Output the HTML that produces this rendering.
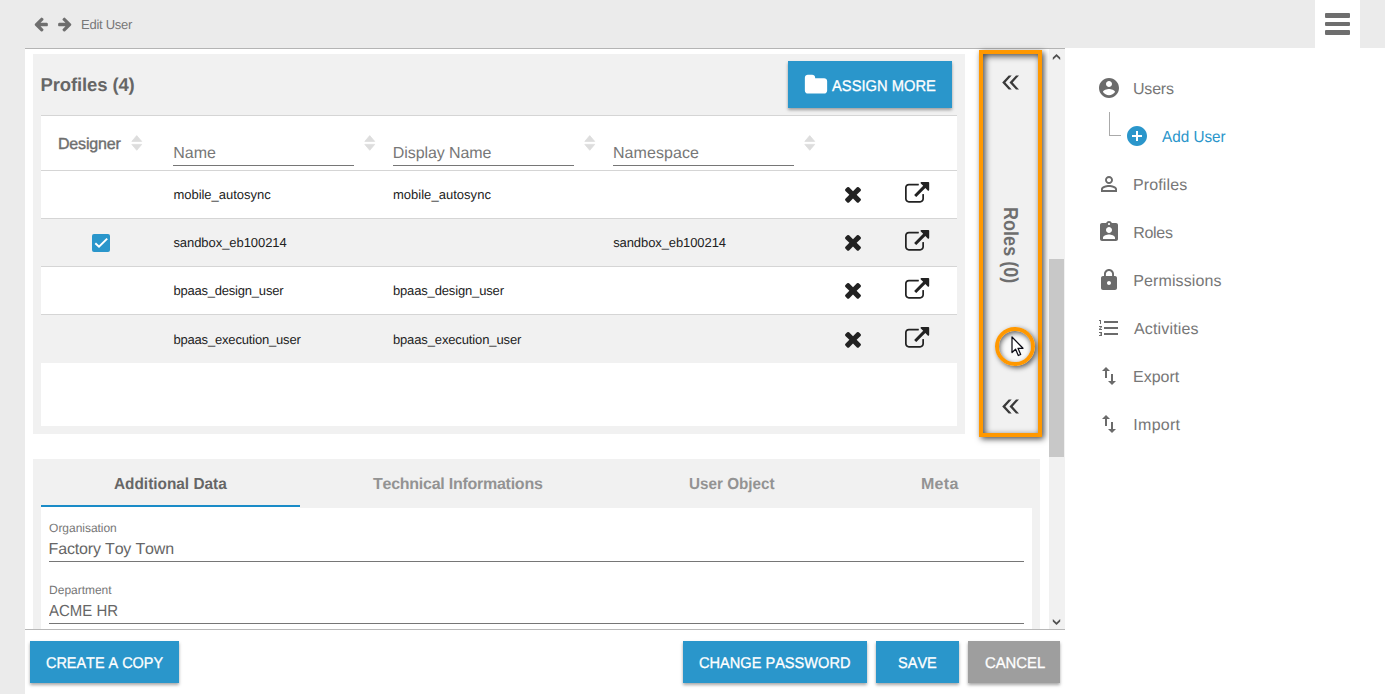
<!DOCTYPE html>
<html lang="en">
<head>
<meta charset="utf-8">
<title>Edit User</title>
<style>
*{box-sizing:border-box;margin:0;padding:0}
html,body{width:1385px;height:694px;overflow:hidden;background:#fff}
body{position:relative;font-family:"Liberation Sans",sans-serif}
.a{position:absolute}
.t{position:absolute;white-space:nowrap;line-height:20px;height:20px;text-rendering:geometricPrecision;font-kerning:none}
.g{background:#ebebeb}
.p{background:#f1f1f1}
.w{background:#fff}
.ln{position:absolute;height:1px;background:#d5d5d5}
.btn{position:absolute;background:#2a96cb;box-shadow:0 2px 3px rgba(0,0,0,.35)}
svg{position:absolute;overflow:visible}
</style>
</head>
<body>
<!-- chrome -->
<div class="a g" style="left:0;top:0;width:25px;height:694px"></div>
<div class="a g" style="left:0;top:0;width:1385px;height:48px"></div>
<div class="a w" style="left:1315px;top:0;width:45px;height:48px"></div>
<div class="a" style="left:1325px;top:13.4px;width:25px;height:4.5px;background:#6e6e6e;border-radius:1px"></div>
<div class="a" style="left:1325px;top:21.7px;width:25px;height:4.5px;background:#6e6e6e;border-radius:1px"></div>
<div class="a" style="left:1325px;top:30px;width:25px;height:4.5px;background:#6e6e6e;border-radius:1px"></div>
<div class="ln" style="left:25px;top:48px;width:1040px;background:#b4b4b4"></div>
<!-- back / forward arrows -->
<svg style="left:33.07px;top:16.25px" width="16" height="16" viewBox="0 0 1792 1792"><path fill="#6e6e6e" d="M1664 896v128q0 53-32.500 90.500t-84.500 37.500h-704l293 294q38 36 38 90t-38 90l-75 76q-37 37-90 37-52 0-91-37l-651-652q-37-37-37-90 0-52 37-91l651-650q38-38 91-38 52 0 90 38l75 74q38 38 38 91t-38 91l-293 293h704q52 0 84.500 37.500t32.500 90.500z"/></svg>
<svg style="left:56.93px;top:16.25px" width="16" height="16" viewBox="0 0 1792 1792"><path fill="#6e6e6e" d="M1600 960q0 54-37 91l-651 651q-39 37-91 37-51 0-90-37l-75-75q-38-38-38-91t38-91l293-293h-704q-52 0-84.500-37.500t-32.500-90.500v-128q0-53 32.500-90.500t84.500-37.500h704l-293-294q-38-36-38-90t38-90l75-75q38-38 90-38 53 0 91 38l651 651q37 35 37 90z"/></svg>

<!-- profiles panel -->
<div class="a p" style="left:33px;top:54px;width:932px;height:380px"></div>
<div class="a w" style="left:41px;top:115px;width:916px;height:311px"></div>
<div class="a p" style="left:41px;top:218px;width:916px;height:48px"></div>
<div class="a p" style="left:41px;top:314px;width:916px;height:49px"></div>
<div class="ln" style="left:41px;top:115px;width:916px"></div>
<div class="ln" style="left:41px;top:170px;width:916px"></div>
<div class="ln" style="left:41px;top:218px;width:916px"></div>
<div class="ln" style="left:41px;top:266px;width:916px"></div>
<div class="ln" style="left:41px;top:314px;width:916px"></div>
<!-- filter underlines -->
<div class="ln" style="left:173px;top:165px;width:181px;background:#767676"></div>
<div class="ln" style="left:393px;top:165px;width:181px;background:#767676"></div>
<div class="ln" style="left:613px;top:165px;width:181px;background:#767676"></div>
<!-- sort icons -->
<svg style="left:131px;top:135px" width="12" height="16" viewBox="0 0 12 16"><path fill="#ddd" stroke="#ddd" stroke-width="0.800" stroke-linejoin="round" d="M0.800 6.400L5.750 0.600L10.700 6.400zM0.800 9.400L10.700 9.400L5.750 15.300z"/></svg>
<svg style="left:364px;top:135px" width="12" height="16" viewBox="0 0 12 16"><path fill="#ddd" stroke="#ddd" stroke-width="0.800" stroke-linejoin="round" d="M0.800 6.400L5.750 0.600L10.700 6.400zM0.800 9.400L10.700 9.400L5.750 15.300z"/></svg>
<svg style="left:584px;top:135px" width="12" height="16" viewBox="0 0 12 16"><path fill="#ddd" stroke="#ddd" stroke-width="0.800" stroke-linejoin="round" d="M0.800 6.400L5.750 0.600L10.700 6.400zM0.800 9.400L10.700 9.400L5.750 15.300z"/></svg>
<svg style="left:804px;top:135px" width="12" height="16" viewBox="0 0 12 16"><path fill="#ddd" stroke="#ddd" stroke-width="0.800" stroke-linejoin="round" d="M0.800 6.400L5.750 0.600L10.700 6.400zM0.800 9.400L10.700 9.400L5.750 15.300z"/></svg>
<!-- checkbox -->
<div class="a" style="left:92px;top:234px;width:18px;height:18px;background:#2a96cb;border-radius:2px"></div>
<svg style="left:92px;top:234px" width="18" height="18" viewBox="0 0 18 18"><path fill="none" stroke="#fff" stroke-width="2" d="M3.300 9.200L7 12.700L15.200 4.600"/></svg>
<svg style="left:841.0px;top:182.4px" width="24" height="24" viewBox="0 0 1792 1792"><path fill="#222" d="M1490 1322q0 40-28 68l-136 136q-28 28-68 28t-68-28l-294-294-294 294q-28 28-68 28t-68-28l-136-136q-28-28-28-68t28-68l294-294-294-294q-28-28-28-68t28-68l136-136q28-28 68-28t68 28l294 294 294-294q28-28 68-28t68 28l136 136q28 28 28 68t-28 68l-294 294 294 294q28 28 28 68z"/></svg>
<svg style="left:905px;top:182.3px" width="24.2" height="24.2" viewBox="0 0 1792 1792"><path fill="#222" d="M1408 928v320q0 119-84.500 203.500t-203.500 84.500h-832q-119 0-203.500-84.500t-84.500-203.500v-832q0-119 84.500-203.500t203.500-84.500h704q14 0 23 9t9 23v64q0 14-9 23t-23 9h-704q-66 0-113 47t-47 113v832q0 66 47 113t113 47h832q66 0 113-47t47-113v-320q0-14 9-23t23-9h64q14 0 23 9t9 23zM1792 64v512q0 26-19 45t-45 19-45-19l-176-176-652 652q-10 10-23 10t-23-10l-114-114q-10-10-10-23t10-23l652-652-176-176q-19-19-19-45t19-45 45-19h512q26 0 45 19t19 45z"/></svg>
<svg style="left:841.0px;top:230.4px" width="24" height="24" viewBox="0 0 1792 1792"><path fill="#222" d="M1490 1322q0 40-28 68l-136 136q-28 28-68 28t-68-28l-294-294-294 294q-28 28-68 28t-68-28l-136-136q-28-28-28-68t28-68l294-294-294-294q-28-28-28-68t28-68l136-136q28-28 68-28t68 28l294 294 294-294q28-28 68-28t68 28l136 136q28 28 28 68t-28 68l-294 294 294 294q28 28 28 68z"/></svg>
<svg style="left:905px;top:230.3px" width="24.2" height="24.2" viewBox="0 0 1792 1792"><path fill="#222" d="M1408 928v320q0 119-84.500 203.500t-203.500 84.500h-832q-119 0-203.500-84.500t-84.500-203.500v-832q0-119 84.500-203.500t203.500-84.500h704q14 0 23 9t9 23v64q0 14-9 23t-23 9h-704q-66 0-113 47t-47 113v832q0 66 47 113t113 47h832q66 0 113-47t47-113v-320q0-14 9-23t23-9h64q14 0 23 9t9 23zM1792 64v512q0 26-19 45t-45 19-45-19l-176-176-652 652q-10 10-23 10t-23-10l-114-114q-10-10-10-23t10-23l652-652-176-176q-19-19-19-45t19-45 45-19h512q26 0 45 19t19 45z"/></svg>
<svg style="left:841.0px;top:278.4px" width="24" height="24" viewBox="0 0 1792 1792"><path fill="#222" d="M1490 1322q0 40-28 68l-136 136q-28 28-68 28t-68-28l-294-294-294 294q-28 28-68 28t-68-28l-136-136q-28-28-28-68t28-68l294-294-294-294q-28-28-28-68t28-68l136-136q28-28 68-28t68 28l294 294 294-294q28-28 68-28t68 28l136 136q28 28 28 68t-28 68l-294 294 294 294q28 28 28 68z"/></svg>
<svg style="left:905px;top:278.3px" width="24.2" height="24.2" viewBox="0 0 1792 1792"><path fill="#222" d="M1408 928v320q0 119-84.500 203.500t-203.500 84.500h-832q-119 0-203.500-84.500t-84.500-203.500v-832q0-119 84.500-203.500t203.500-84.500h704q14 0 23 9t9 23v64q0 14-9 23t-23 9h-704q-66 0-113 47t-47 113v832q0 66 47 113t113 47h832q66 0 113-47t47-113v-320q0-14 9-23t23-9h64q14 0 23 9t9 23zM1792 64v512q0 26-19 45t-45 19-45-19l-176-176-652 652q-10 10-23 10t-23-10l-114-114q-10-10-10-23t10-23l652-652-176-176q-19-19-19-45t19-45 45-19h512q26 0 45 19t19 45z"/></svg>
<svg style="left:841.0px;top:327.4px" width="24" height="24" viewBox="0 0 1792 1792"><path fill="#222" d="M1490 1322q0 40-28 68l-136 136q-28 28-68 28t-68-28l-294-294-294 294q-28 28-68 28t-68-28l-136-136q-28-28-28-68t28-68l294-294-294-294q-28-28-28-68t28-68l136-136q28-28 68-28t68 28l294 294 294-294q28-28 68-28t68 28l136 136q28 28 28 68t-28 68l-294 294 294 294q28 28 28 68z"/></svg>
<svg style="left:905px;top:327.2px" width="24.2" height="24.2" viewBox="0 0 1792 1792"><path fill="#222" d="M1408 928v320q0 119-84.500 203.500t-203.500 84.500h-832q-119 0-203.500-84.500t-84.500-203.500v-832q0-119 84.500-203.500t203.500-84.500h704q14 0 23 9t9 23v64q0 14-9 23t-23 9h-704q-66 0-113 47t-47 113v832q0 66 47 113t113 47h832q66 0 113-47t47-113v-320q0-14 9-23t23-9h64q14 0 23 9t9 23zM1792 64v512q0 26-19 45t-45 19-45-19l-176-176-652 652q-10 10-23 10t-23-10l-114-114q-10-10-10-23t10-23l652-652-176-176q-19-19-19-45t19-45 45-19h512q26 0 45 19t19 45z"/></svg>
<!-- assign more -->
<div class="btn" style="left:788px;top:61px;width:164px;height:46.600px"></div>
<svg style="left:804.4px;top:72.5px" width="24" height="24" viewBox="0 0 1792 1792"><path fill="#fff" d="M1728 608v704q0 92-66 158t-158 66h-1216q-92 0-158-66t-66-158v-960q0-92 66-158t158-66h320q92 0 158 66t66 158v32h672q92 0 158 66t66 158z"/></svg>

<!-- roles collapsed panel with highlight -->
<div class="a" style="left:979px;top:50px;width:63px;height:387px;background:#f1f1f1;border:4px solid #ff9800;box-shadow:2px 2px 6px rgba(0,0,0,.7), inset 2px 2px 6px rgba(0,0,0,.7)"></div>
<svg style="left:0;top:0" width="1385" height="694" viewBox="0 0 1385 694"><path fill="#3a3a3a" d="M1002.2 82.5L1008.7 75.5L1011.7 75.5L1005.4 82.5L1011.7 89.5L1008.7 89.5ZM1009.5 82.5L1016.0 75.5L1019.0 75.5L1012.7 82.5L1019.0 89.5L1016.0 89.5ZM1002.2 406.5L1008.7 399.5L1011.7 399.5L1005.4 406.5L1011.7 413.5L1008.7 413.5ZM1009.5 406.5L1016.0 399.5L1019.0 399.5L1012.7 406.5L1019.0 413.5L1016.0 413.5Z"/></svg>
<div class="t" style="left:974px;top:233.900px;width:74px;text-align:center;font-size:18px;font-weight:700;color:#6e6e6e;transform:rotate(90deg) scale(1,1.12);letter-spacing:0.030px">Roles (0)</div>
<!-- click marker + cursor -->
<div class="a" style="left:995px;top:326.600px;width:40px;height:39.500px;border-radius:50%;border:4px solid #ff9800;background:rgba(255,255,255,.55);box-shadow:2px 2px 5px rgba(0,0,0,.6), inset 1px 2px 5px rgba(0,0,0,.6)"></div>
<svg style="left:1010.7px;top:336px" width="14" height="21" viewBox="0 0 14 21"><path fill="#fff" stroke="#0a0a14" stroke-width="1.250" stroke-linejoin="round" d="M1 1L1 16.500L4.600 13.200L7.300 19.500L9.700 18.500L7 12.300L12 12.300z"/></svg>

<!-- scrollbar -->
<div class="a p" style="left:1049px;top:49px;width:16px;height:580px"></div>
<div class="a" style="left:1049px;top:259px;width:15px;height:198px;background:#c8c8c8"></div>
<svg style="left:0;top:0" width="1385" height="694" viewBox="0 0 1385 694"><path fill="#505050" d="M1056.500 53.900L1060.200 57.600L1060.200 60.100L1056.500 56.600L1052.800 60.100L1052.800 57.600ZM1052.800 619L1056.500 622.500L1060.200 619L1060.200 621.500L1056.500 625.100L1052.800 621.500Z"/></svg>

<!-- tabs panel -->
<div class="a p" style="left:33px;top:459px;width:1007px;height:170px"></div>
<div class="a w" style="left:41px;top:508px;width:991px;height:121px"></div>
<div class="a w" style="left:41px;top:507px;width:259px;height:1px"></div>
<div class="a" style="left:41px;top:505px;width:259px;height:2px;background:#1a8bc7"></div>
<div class="ln" style="left:49px;top:561px;width:975px;background:#767676"></div>
<div class="ln" style="left:49px;top:623px;width:975px;background:#767676"></div>
<div class="ln" style="left:25px;top:629px;width:1040px;background:#b8b8b8"></div>

<!-- footer buttons -->
<div class="btn" style="left:30px;top:641px;width:149px;height:42px"></div>
<div class="btn" style="left:683px;top:641px;width:184px;height:42px"></div>
<div class="btn" style="left:876px;top:641px;width:83px;height:42px"></div>
<div class="btn" style="left:968px;top:641px;width:92px;height:42px;background:#9e9e9e"></div>

<!-- right nav icons -->
<svg style="left:1097px;top:76px" width="24" height="24" viewBox="0 0 24 24"><path fill="#6b6b6b" d="M12 2C6.480 2 2 6.480 2 12s4.480 10 10 10 10-4.480 10-10S17.520 2 12 2zm0 3c1.660 0 3 1.340 3 3s-1.340 3-3 3-3-1.340-3-3 1.340-3 3-3zm0 14.200c-2.500 0-4.710-1.280-6-3.220.030-1.990 4-3.080 6-3.080 1.990 0 5.970 1.090 6 3.080-1.290 1.940-3.500 3.220-6 3.220z"/></svg>
<div class="a" style="left:1109px;top:112px;width:12px;height:24px;border-left:1px solid #aaa;border-bottom:1px solid #aaa"></div>
<svg style="left:1125px;top:124px" width="24" height="24" viewBox="0 0 24 24"><path fill="#2a96cb" d="M12 2C6.480 2 2 6.480 2 12s4.480 10 10 10 10-4.480 10-10S17.520 2 12 2zm5 11h-4v4h-2v-4H7v-2h4V7h2v4h4v2z"/></svg>
<svg style="left:1097px;top:172px" width="24" height="24" viewBox="0 0 24 24"><path fill="#6b6b6b" d="M12 5.900c1.160 0 2.100.940 2.100 2.100s-.940 2.100-2.100 2.100S9.900 9.160 9.900 8s.940-2.100 2.100-2.100m0 9c2.970 0 6.100 1.460 6.100 2.100v1.100H5.900V17c0-.640 3.130-2.100 6.100-2.100M12 4C9.790 4 8 5.790 8 8s1.790 4 4 4 4-1.790 4-4-1.790-4-4-4zm0 9c-2.670 0-8 1.340-8 4v3h16v-3c0-2.660-5.330-4-8-4z"/></svg>
<svg style="left:1097px;top:220px" width="24" height="24" viewBox="0 0 24 24"><path fill="#6b6b6b" d="M19 3h-4.180C14.400 1.840 13.300 1 12 1c-1.300 0-2.400.840-2.820 2H5c-1.100 0-2 .900-2 2v14c0 1.100.900 2 2 2h14c1.100 0 2-.900 2-2V5c0-1.100-.900-2-2-2zm-7 0c.550 0 1 .450 1 1s-.450 1-1 1-1-.450-1-1 .450-1 1-1zm0 4c1.660 0 3 1.340 3 3s-1.340 3-3 3-3-1.340-3-3 1.340-3 3-3zm6 12H6v-1.400c0-2 4-3.100 6-3.100s6 1.100 6 3.100V19z"/></svg>
<svg style="left:1097px;top:268px" width="24" height="24" viewBox="0 0 24 24"><path fill="#6b6b6b" d="M18 8h-1V6c0-2.760-2.240-5-5-5S7 3.240 7 6v2H6c-1.100 0-2 .900-2 2v10c0 1.100.900 2 2 2h12c1.100 0 2-.900 2-2V10c0-1.100-.900-2-2-2zm-6 9c-1.100 0-2-.900-2-2s.900-2 2-2 2 .900 2 2-.900 2-2 2zm3.100-9H8.900V6c0-1.710 1.390-3.100 3.100-3.100 1.710 0 3.100 1.390 3.100 3.100v2z"/></svg>
<svg style="left:1097px;top:316px" width="24" height="24" viewBox="0 0 24 24"><path fill="#6b6b6b" d="M2 17h2v.5H3v1h1v.5H2v1h3v-4H2v1zm1-9h1V4H2v1h1v3zm-1 3h1.800L2 13.100v.900h3v-1H3.200L5 10.900V10H2v1zm5-6v2h14V5H7zm0 14h14v-2H7v2zm0-6h14v-2H7v2z"/></svg>
<svg style="left:1097px;top:364px" width="24" height="24" viewBox="0 0 24 24"><path fill="#6b6b6b" d="M9 3L5 6.990h3V14h2V6.990h3L9 3zm7 14.010V10h-2v7.010h-3L15 21l4-3.990h-3z"/></svg>
<svg style="left:1097px;top:412px" width="24" height="24" viewBox="0 0 24 24"><path fill="#6b6b6b" d="M9 3L5 6.990h3V14h2V6.990h3L9 3zm7 14.010V10h-2v7.010h-3L15 21l4-3.990h-3z"/></svg>

<!-- texts -->
<div class="t" style="left:81.10px;top:15.00px;font-size:13px;font-weight:400;color:#777;letter-spacing:-0.279px">Edit User</div>
<div class="t" style="left:40.50px;top:75.00px;font-size:18.5px;font-weight:700;color:#666;letter-spacing:-0.122px">Profiles (4)</div>
<div class="t" style="left:832.40px;top:77.00px;font-size:15.5px;font-weight:400;color:#fff;letter-spacing:0.000px;transform:scaleX(0.9492);transform-origin:0 50%;-webkit-text-stroke:0.3px">ASSIGN MORE</div>
<div class="t" style="left:58.00px;top:135.00px;font-size:16px;font-weight:400;color:#6e6e6e;letter-spacing:-0.186px;-webkit-text-stroke:0.4px">Designer</div>
<div class="t" style="left:173.20px;top:144.00px;font-size:16px;font-weight:400;color:#777;letter-spacing:0.040px">Name</div>
<div class="t" style="left:392.80px;top:144.00px;font-size:16px;font-weight:400;color:#777;letter-spacing:-0.081px">Display Name</div>
<div class="t" style="left:612.90px;top:144.00px;font-size:16px;font-weight:400;color:#777;letter-spacing:0.078px">Namespace</div>
<div class="t" style="left:173.40px;top:185.00px;font-size:13px;font-weight:400;color:#222;letter-spacing:-0.018px">mobile_autosync</div>
<div class="t" style="left:392.90px;top:185.00px;font-size:13px;font-weight:400;color:#222;letter-spacing:0.032px">mobile_autosync</div>
<div class="t" style="left:173.40px;top:233.00px;font-size:13px;font-weight:400;color:#222;letter-spacing:-0.059px">sandbox_eb100214</div>
<div class="t" style="left:613.20px;top:233.00px;font-size:13px;font-weight:400;color:#222;letter-spacing:-0.093px">sandbox_eb100214</div>
<div class="t" style="left:173.40px;top:281.00px;font-size:13px;font-weight:400;color:#222;letter-spacing:-0.209px">bpaas_design_user</div>
<div class="t" style="left:392.90px;top:281.00px;font-size:13px;font-weight:400;color:#222;letter-spacing:-0.147px">bpaas_design_user</div>
<div class="t" style="left:173.40px;top:330.00px;font-size:13px;font-weight:400;color:#222;letter-spacing:-0.178px">bpaas_execution_user</div>
<div class="t" style="left:392.90px;top:330.00px;font-size:13px;font-weight:400;color:#222;letter-spacing:-0.126px">bpaas_execution_user</div>
<div class="t" style="left:1133.00px;top:80.00px;font-size:16px;font-weight:400;color:#777;letter-spacing:-0.195px">Users</div>
<div class="t" style="left:1162.30px;top:128.00px;font-size:16px;font-weight:400;color:#2a96cb;letter-spacing:0.000px;transform:scaleX(0.9545);transform-origin:0 50%">Add User</div>
<div class="t" style="left:1133.00px;top:176.00px;font-size:16px;font-weight:400;color:#777;letter-spacing:0.121px">Profiles</div>
<div class="t" style="left:1133.20px;top:224.00px;font-size:16px;font-weight:400;color:#777;letter-spacing:-0.302px">Roles</div>
<div class="t" style="left:1133.20px;top:272.00px;font-size:16px;font-weight:400;color:#777;letter-spacing:0.127px">Permissions</div>
<div class="t" style="left:1134.00px;top:320.00px;font-size:16px;font-weight:400;color:#777;letter-spacing:0.164px">Activities</div>
<div class="t" style="left:1133.10px;top:368.00px;font-size:16px;font-weight:400;color:#777;letter-spacing:-0.019px">Export</div>
<div class="t" style="left:1133.30px;top:416.00px;font-size:16px;font-weight:400;color:#777;letter-spacing:0.280px">Import</div>
<div class="t" style="left:113.60px;top:475.00px;font-size:16px;font-weight:700;color:#666;letter-spacing:0.000px;transform:scaleX(0.9605);transform-origin:0 50%">Additional Data</div>
<div class="t" style="left:373.00px;top:475.00px;font-size:16px;font-weight:700;color:#939393;letter-spacing:-0.254px">Technical Informations</div>
<div class="t" style="left:689.40px;top:475.00px;font-size:16px;font-weight:700;color:#939393;letter-spacing:0.000px;transform:scaleX(0.9527);transform-origin:0 50%">User Object</div>
<div class="t" style="left:921.00px;top:475.00px;font-size:16px;font-weight:700;color:#939393;letter-spacing:0.282px">Meta</div>
<div class="t" style="left:49.10px;top:518.00px;font-size:12px;font-weight:400;color:#777;letter-spacing:-0.033px">Organisation</div>
<div class="t" style="left:48.60px;top:540.00px;font-size:16px;font-weight:400;color:#666;letter-spacing:-0.169px">Factory Toy Town</div>
<div class="t" style="left:49.10px;top:580.00px;font-size:12px;font-weight:400;color:#777;letter-spacing:-0.029px">Department</div>
<div class="t" style="left:49.30px;top:602.00px;font-size:16px;font-weight:400;color:#666;letter-spacing:0.000px;transform:scaleX(0.9355);transform-origin:0 50%">ACME HR</div>
<div class="t" style="left:46.00px;top:654.00px;font-size:15.5px;font-weight:400;color:#fff;letter-spacing:0.000px;transform:scaleX(0.9305);transform-origin:0 50%;-webkit-text-stroke:0.3px">CREATE A COPY</div>
<div class="t" style="left:699.10px;top:654.00px;font-size:15.5px;font-weight:400;color:#fff;letter-spacing:0.000px;transform:scaleX(0.9406);transform-origin:0 50%;-webkit-text-stroke:0.3px">CHANGE PASSWORD</div>
<div class="t" style="left:897.70px;top:654.00px;font-size:15.5px;font-weight:400;color:#fff;letter-spacing:0.000px;transform:scaleX(0.9387);transform-origin:0 50%;-webkit-text-stroke:0.3px">SAVE</div>
<div class="t" style="left:984.90px;top:654.00px;font-size:15.5px;font-weight:400;color:#fff;letter-spacing:0.000px;transform:scaleX(0.9564);transform-origin:0 50%;-webkit-text-stroke:0.3px">CANCEL</div>
</body>
</html>
